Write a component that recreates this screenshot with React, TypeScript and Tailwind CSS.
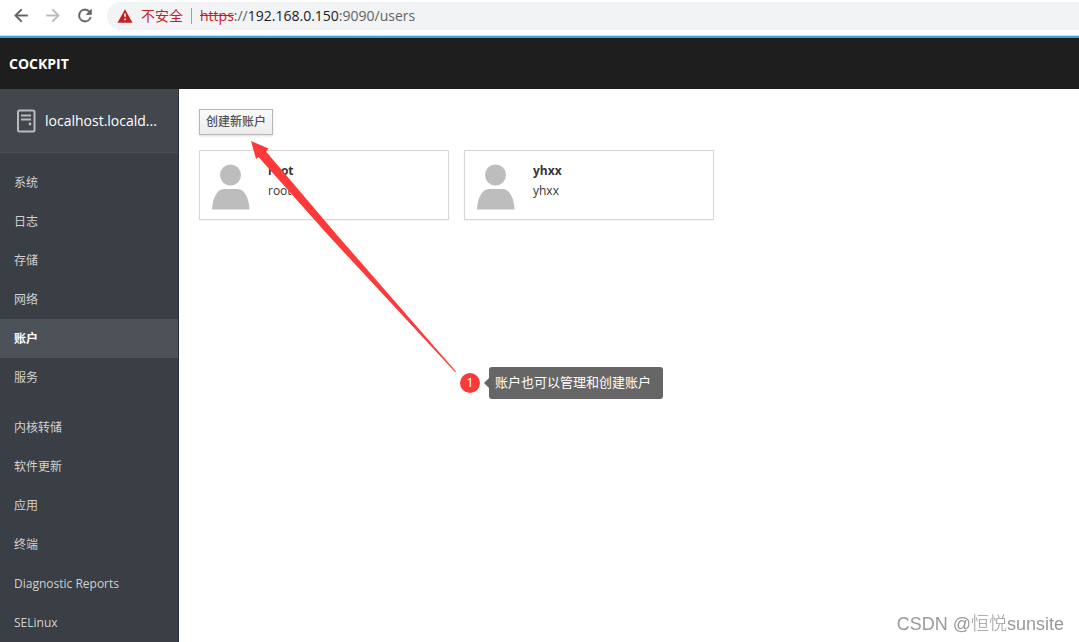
import React from 'react';

interface Account {
  name: string;
  fullName: string;
}

interface NavItemProps {
  label: string;
  active?: boolean;
}

const ACCOUNTS: Account[] = [
  { name: 'root', fullName: 'root' },
  { name: 'yhxx', fullName: 'yhxx' },
];

const SYSTEM_ITEMS = ['系统', '日志', '存储', '网络', '账户', '服务'];
const TOOL_ITEMS = ['内核转储', '软件更新', '应用', '终端', 'Diagnostic Reports', 'SELinux'];

const BrowserBar: React.FC = () => (
  <div className="flex h-9 items-center border-b border-[#dadce0] bg-white pb-1 pl-[11px]">
    <div className="flex items-center gap-3 pr-3">
      <button aria-label="Back" className="flex size-5 items-center justify-center text-[#5f6368]">
        <svg width="21" height="21" viewBox="0 0 24 24" fill="currentColor" stroke="currentColor" strokeWidth="0.4"><path d="M20 11H7.830l5.590-5.590L12 4l-8 8 8 8 1.410-1.410L7.830 13H20v-2z" /></svg>
      </button>
      <button aria-label="Forward" className="flex size-5 items-center justify-center text-[#babcbe]">
        <svg width="21" height="21" viewBox="0 0 24 24" fill="currentColor" stroke="currentColor" strokeWidth="0.4"><path d="M12 4l-1.410 1.410L16.170 11H4v2h12.170l-5.580 5.590L12 20l8-8z" /></svg>
      </button>
      <button aria-label="Reload" className="flex size-5 items-center justify-center text-[#5f6368]">
        <svg width="21" height="21" viewBox="0 0 24 24" fill="currentColor" stroke="currentColor" strokeWidth="0.4"><path d="M17.650 6.350A7.960 7.960 0 0 0 12 4a8 8 0 1 0 7.730 10h-2.080A6 6 0 1 1 12 6c1.660 0 3.140.690 4.220 1.780L13 11h7V4l-2.350 2.350z" /></svg>
      </button>
    </div>
    <div className="flex h-7 min-w-0 flex-1 items-center rounded-l-full bg-[#f1f3f4] pl-2 text-sm whitespace-nowrap">
      <svg className="mr-1.5 shrink-0" width="20" height="20" viewBox="0 0 24 24" fill="#c5221f"><path d="M3 20h18L12 4 3 20zm10-3h-2v-2h2v2zm0-4h-2V9h2v4z" /></svg>
      <span className="text-[#c5221f]">不安全</span>
      <span className="mx-2 h-4 w-px bg-[#9aa0a6]" />
      <span className="text-[#5f6368]">
        <span className="text-[#c5221f] line-through">https</span>
        ://<span className="text-[#202124]">192.168.0.150</span>:9090/users
      </span>
    </div>
  </div>
);

const NavItem: React.FC<NavItemProps> = ({ label, active }) => (
  <li>
    <a
      href="#"
      className={
        active
          ? 'flex h-[39px] items-center bg-[#4d5258] pl-[14px] font-bold text-white'
          : 'flex h-[39px] items-center pl-[14px] text-[#d1d1d1] hover:bg-[#4d5258]'
      }
    >
      {label}
    </a>
  </li>
);

const Sidebar: React.FC = () => (
  <aside className="w-[179px] shrink-0 border-r border-[#292e34] bg-[#393f44] text-xs">
    <a href="#" className="flex h-[63px] items-center bg-[#42474d] pl-4 text-sm text-white">
      <svg className="mr-[9px] shrink-0" width="20" height="24" viewBox="0 0 20 24" fill="none" stroke="#bababa" strokeWidth="2">
        <rect x="2" y="1.500" width="16.500" height="21" rx="1.500" />
        <path d="M5 6.500h10M5 10.500h10" />
        <circle cx="14" cy="15" r="1.400" fill="#bababa" stroke="none" />
      </svg>
      <span>localhost.locald...</span>
    </a>
    <nav className="border-t border-[#474c53] pt-[10px]">
      <ul>
        {SYSTEM_ITEMS.map((label) => (
          <NavItem key={label} label={label} active={label === '账户'} />
        ))}
      </ul>
      <ul className="pt-[11px]">
        {TOOL_ITEMS.map((label) => (
          <NavItem key={label} label={label} />
        ))}
      </ul>
    </nav>
  </aside>
);

const AccountCard: React.FC<{ account: Account }> = ({ account }) => (
  <a
    href="#"
    className="flex h-[70px] w-[250px] border border-[#d6d6d6] bg-white pl-3 text-xs leading-5 text-[#363636] shadow-xs"
  >
    <svg className="mt-3 mr-[18px] shrink-0" width="38" height="48" viewBox="0 0 38 48" fill="#bdbdbd">
      <circle cx="18.500" cy="12" r="10.500" />
      <path d="M0 46.500C0.500 35 5 26 12 26H25.500C32.500 26 37 35 37.500 46.500Z" />
    </svg>
    <div className="pt-[10px]">
      <div className="font-bold">{account.name}</div>
      <div>{account.fullName}</div>
    </div>
  </a>
);

// arrow and numbered note pointing at the create button
const Annotation: React.FC = () => (
  <>
    <svg className="pointer-events-none absolute top-[52px] left-[72px]" width="206" height="232" viewBox="0 0 206 232" fill="#fc3a3a">
      <path d="M0 0L17.500 7.500L15 10.500L86 94L205 230.500L204 231L77 94L7.500 16L5 18Z" />
    </svg>
    <div className="absolute top-[278px] left-[281px] flex items-center text-[13px] text-white">
      <span className="flex size-5 items-center justify-center rounded-full bg-[#fc3a3a]">1</span>
      <svg className="ml-1" width="5" height="10" viewBox="0 0 5 10" fill="#666666"><path d="M5 0L0 5l5 5z" /></svg>
      <span className="flex h-8 items-center rounded-[3px] bg-[#666666] pr-3 pl-[6px] whitespace-nowrap">账户也可以管理和创建账户</span>
    </div>
  </>
);

const App: React.FC = () => {
  return (
    <div className="flex min-h-screen flex-col bg-white font-['Open_Sans','Noto_Sans_CJK_SC',sans-serif]">
      <BrowserBar />
      <header className="flex h-[53px] items-center border-t-2 border-[#39a5dc] bg-[#1e1e1e] pl-[9px] text-sm font-bold text-white">
        COCKPIT
      </header>
      <div className="flex flex-1">
        <Sidebar />
        <main className="relative flex min-w-0 flex-1 flex-col items-start gap-[15px] px-5 pt-5">
          <button className="h-[26px] border border-[#b7b7b7] bg-linear-to-b from-[#fafafa] to-[#ededed] px-[6px] text-xs font-medium text-[#4d5258] shadow-sm">
            创建新账户
          </button>
          <div className="flex flex-wrap gap-[15px]">
            {ACCOUNTS.map((account) => (
              <AccountCard key={account.name} account={account} />
            ))}
          </div>
          <Annotation />
        </main>
      </div>
      <div className="fixed right-[15px] bottom-1 font-['Liberation_Sans','Noto_Sans_CJK_SC',sans-serif] text-lg font-light text-[#999999]">
        CSDN @恒悦sunsite
      </div>
    </div>
  );
};

export default App;
